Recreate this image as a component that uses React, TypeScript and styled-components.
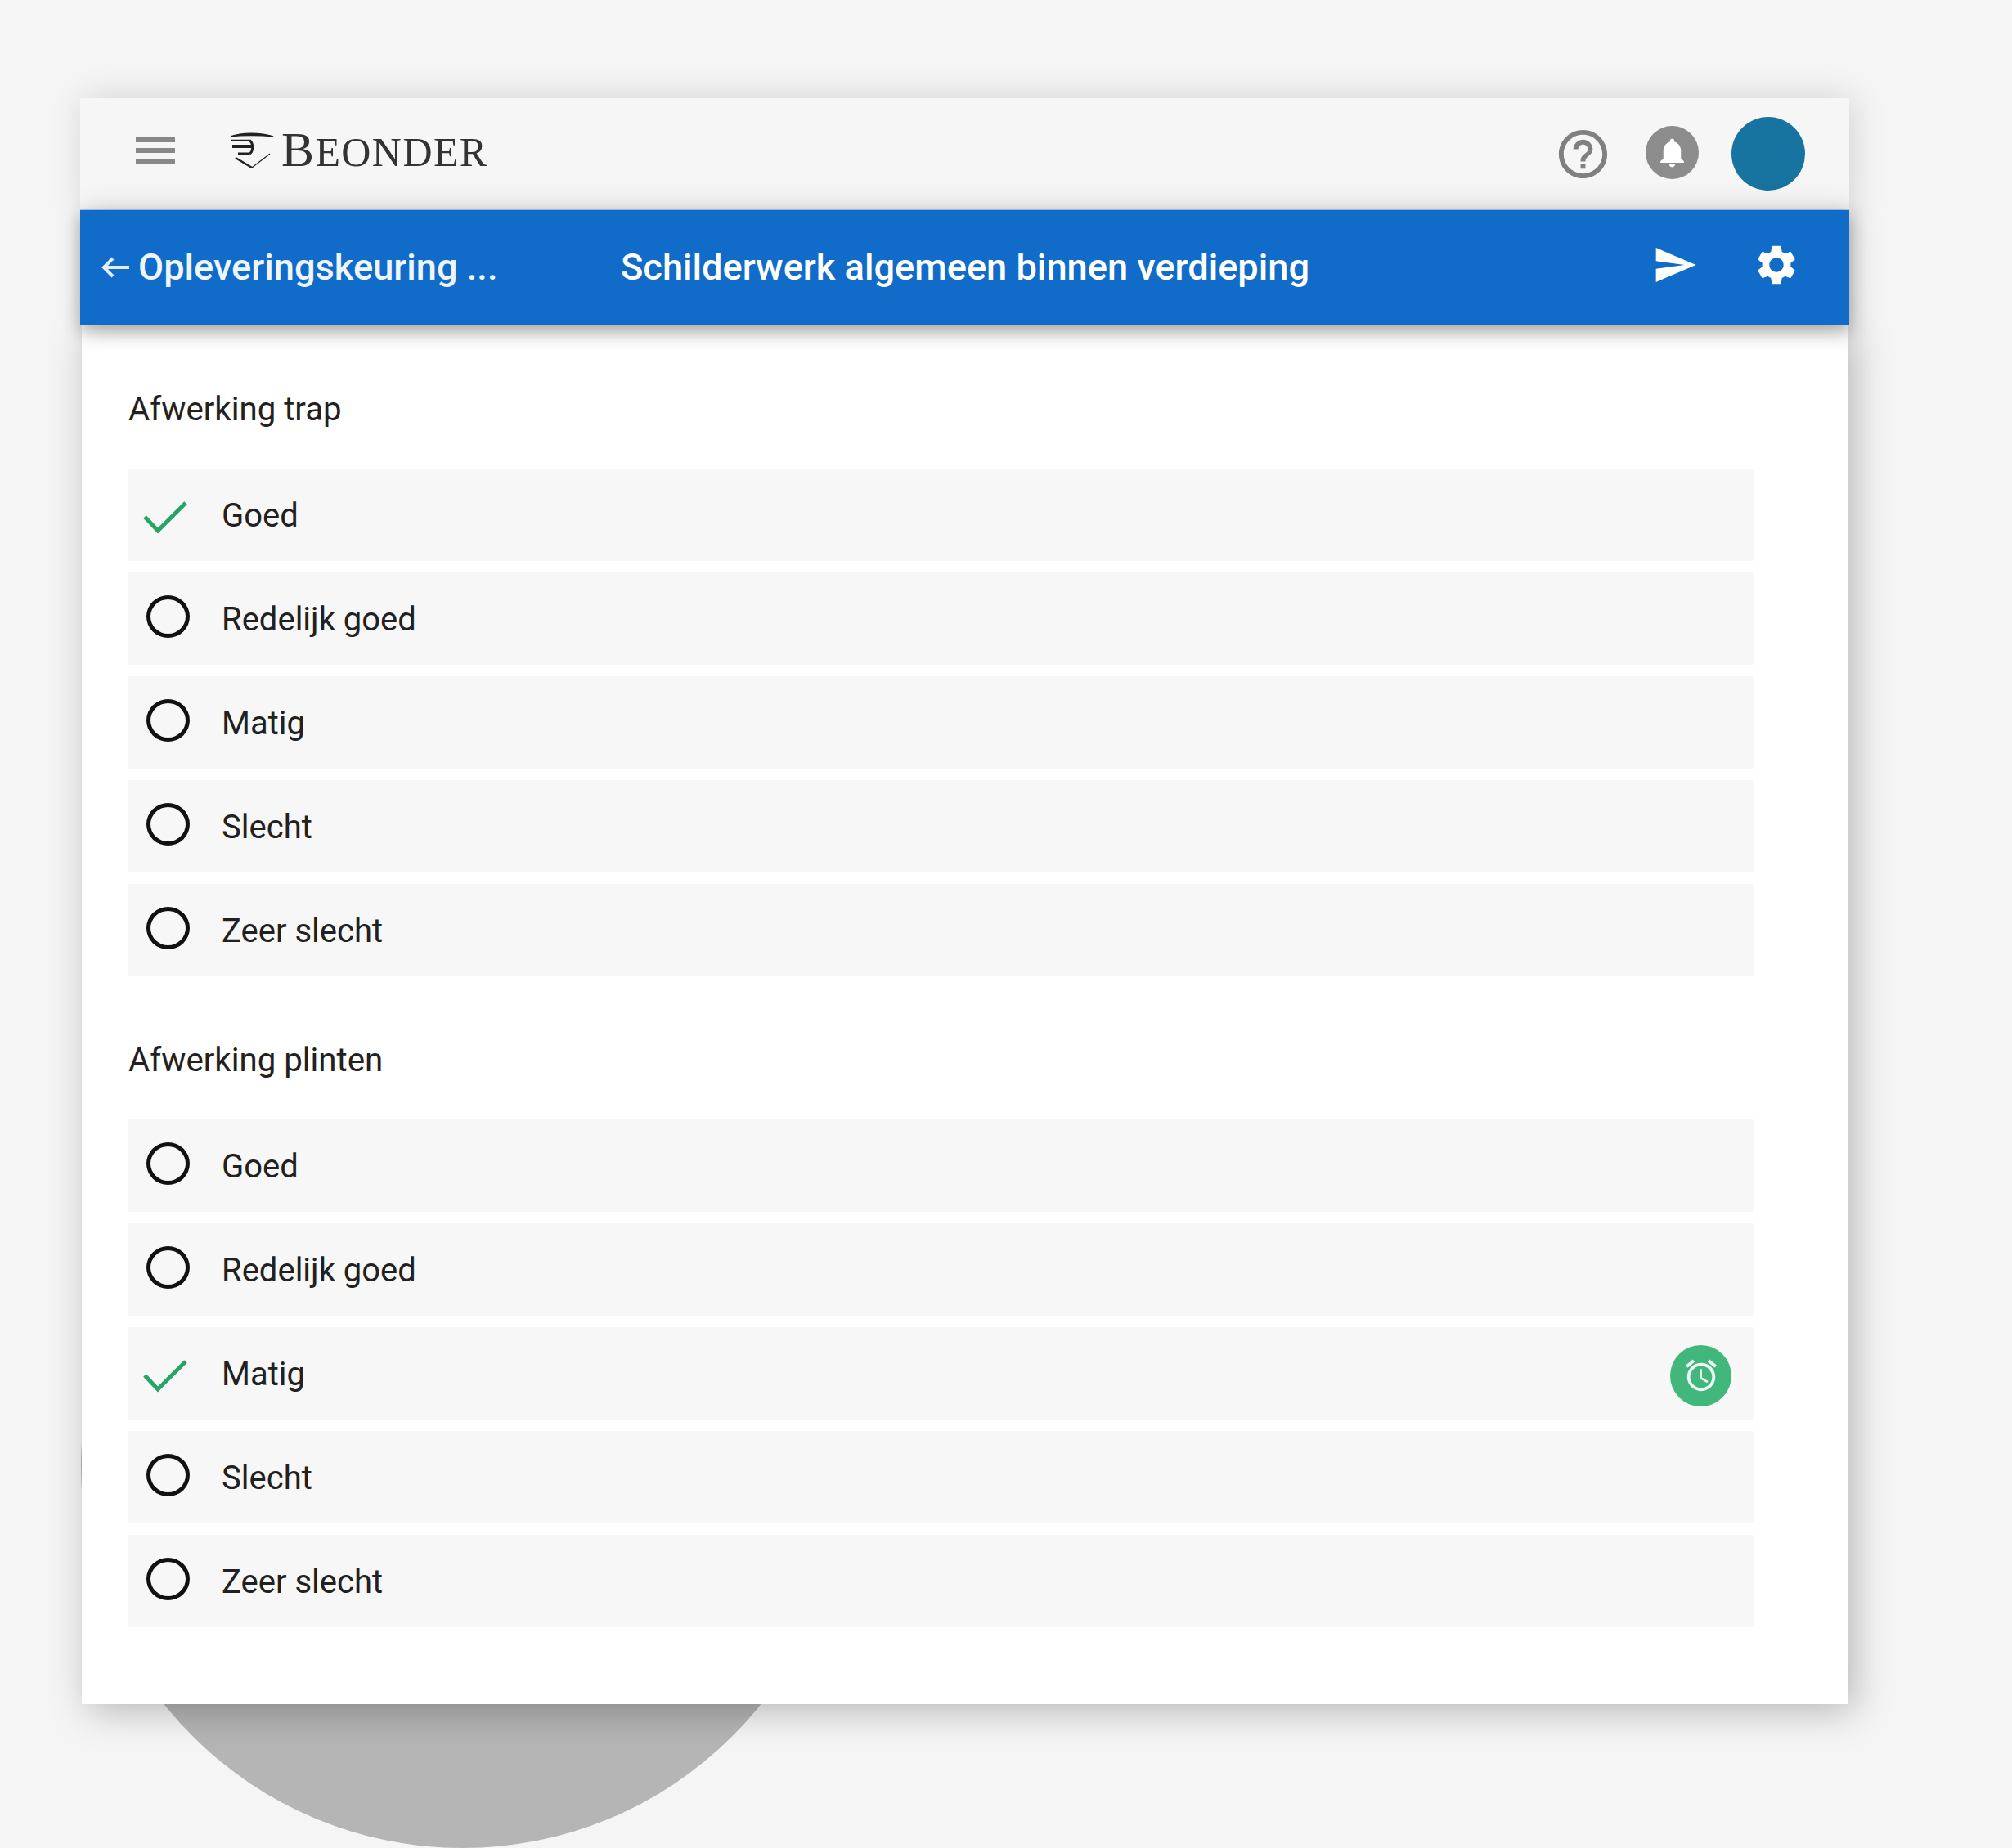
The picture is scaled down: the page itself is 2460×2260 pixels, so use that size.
import styled, { createGlobalStyle } from 'styled-components';
import { MdHelpOutline, MdNotifications, MdSend, MdSettings, MdOutlineAlarm } from 'react-icons/md';

const options = ['Goed', 'Redelijk goed', 'Matig', 'Slecht', 'Zeer slecht'];

const groups = [
  { title: 'Afwerking trap', checked: 'Goed', alarm: false },
  { title: 'Afwerking plinten', checked: 'Matig', alarm: true },
];

const App = () => {
  return (
    <Page>
      <GlobalStyle />
      <BackCircle />
      <Card>
        <TopBar>
          <Hamburger>
            <span />
            <span />
            <span />
          </Hamburger>
          <Logo>
            <svg width="54" height="46" viewBox="0 0 54 46" fill="none" stroke="#222">
              <path d="M1 6 C14 1 38 1 53 6 C38 4 14 4 1 6 Z" strokeWidth="1.4" fill="#222" />
              <path d="M1 10.5 H24" strokeWidth="1.5" />
              <path d="M3 18 H27" strokeWidth="4" />
              <path d="M10 27 H24" strokeWidth="3" />
              <path d="M24 10.5 C29 14 29 24 24 27" strokeWidth="3" />
              <path d="M7 32 L27 44" strokeWidth="2.6" />
              <path d="M27 44 L49 27" strokeWidth="1.2" />
            </svg>
            <LogoText>
              B<small>EONDER</small>
            </LogoText>
          </Logo>
          <TopActions>
            <HelpIcon />
            <BellBadge>
              <MdNotifications size={43} color="#fff" />
            </BellBadge>
            <Avatar />
          </TopActions>
        </TopBar>
        <TitleBar>
          <BackLink>
            <svg width="34" height="28" viewBox="0 0 34 28" fill="none" stroke="#e4eefa" strokeWidth="4">
              <path d="M14 3 L3 14 L14 25 M3 14 H34" />
            </svg>
            <span>Opleveringskeuring ...</span>
          </BackLink>
          <PageTitle>Schilderwerk algemeen binnen verdieping</PageTitle>
          <SendIcon />
          <GearIcon />
        </TitleBar>
        <Body>
          {groups.map((group) => (
            <Group key={group.title}>
              <GroupTitle>{group.title}</GroupTitle>
              <OptionList>
                {options.map((option) => (
                  <OptionRow key={option}>
                    <Marker $checked={option === group.checked}>
                      {option === group.checked ? (
                        <svg width="54" height="42" viewBox="0 0 54 42" fill="none" stroke="#27a567" strokeWidth="5">
                          <path d="M2 20 L18 37 L52 3" />
                        </svg>
                      ) : (
                        <Radio />
                      )}
                    </Marker>
                    <OptionText>{option}</OptionText>
                    {group.alarm && option === group.checked && (
                      <AlarmBadge>
                        <MdOutlineAlarm size={46} color="#f0faf5" />
                      </AlarmBadge>
                    )}
                  </OptionRow>
                ))}
              </OptionList>
            </Group>
          ))}
        </Body>
      </Card>
    </Page>
  );
};

const GlobalStyle = createGlobalStyle`
  body {
    margin: 0;
    background: #f5f5f5;
    font-family: Roboto, 'Liberation Sans', sans-serif;
  }
`;

const Page = styled.div`
  position: relative;
  width: 2460px;
  height: 2260px;
  padding: 120px 0 0 98px;
  box-sizing: border-box;
  overflow: hidden;
  background: #f5f5f5;
`;

const BackCircle = styled.div`
  position: absolute;
  left: 99px;
  top: 1327px;
  width: 933px;
  height: 933px;
  border-radius: 50%;
  background: #b5b5b5;
`;

const Card = styled.div`
  position: relative;
  width: 2163px;
`;

const TopBar = styled.header`
  display: flex;
  align-items: center;
  height: 137px;
  padding: 0 54px 0 68px;
  box-sizing: border-box;
  background: #f6f6f6;
  border-bottom: 1px solid #b7cfe8;
  box-shadow: 4px 0 40px rgba(0, 0, 0, 0.14);
`;

const Hamburger = styled.div`
  display: flex;
  flex-direction: column;
  justify-content: space-between;
  width: 48px;
  height: 32px;
  margin-top: -8px;

  span {
    height: 6px;
    background: #888;
  }
`;

const Logo = styled.div`
  display: flex;
  align-items: center;
  gap: 9px;
  margin: -8px 0 0 67px;
`;

const LogoText = styled.div`
  font-family: 'Liberation Serif', serif;
  font-size: 60px;
  line-height: 60px;
  letter-spacing: 1.4px;
  color: #333;

  small {
    font-size: 50px;
  }
`;

const TopActions = styled.div`
  display: flex;
  align-items: center;
  margin-left: auto;
`;

const HelpIcon = styled(MdHelpOutline)`
  width: 71px;
  height: 71px;
  color: #808080;
`;

const BellBadge = styled.div`
  display: flex;
  align-items: center;
  justify-content: center;
  width: 65px;
  height: 65px;
  margin: -4px 40px 0 41px;
  border-radius: 50%;
  background: #8c8c8c;
`;

const Avatar = styled.div`
  width: 90px;
  height: 90px;
  border-radius: 50%;
  background: #17739f;
`;

const TitleBar = styled.div`
  position: relative;
  z-index: 1;
  display: flex;
  align-items: center;
  height: 140px;
  padding: 0 60px 0 26px;
  box-sizing: border-box;
  background: #116bc8;
  color: #fff;
  box-shadow: 0 8px 20px rgba(0, 0, 0, 0.3), 8px 0 36px rgba(0, 0, 0, 0.14);
`;

const BackLink = styled.div`
  display: flex;
  align-items: center;
  gap: 11px;
  width: 635px;
  font-size: 45.2px;
  font-weight: 500;
  color: #eef5fc;

  span {
    margin-top: -2px;
  }
`;

const PageTitle = styled.div`
  flex: 1;
  margin-top: -2px;
  font-size: 45.2px;
  font-weight: 500;
`;

const SendIcon = styled(MdSend)`
  width: 56px;
  height: 56px;
  margin: -6px 0 0 0;
  color: #fff;
`;

const GearIcon = styled(MdSettings)`
  width: 58px;
  height: 58px;
  margin: -6px 0 0 67px;
  color: #fff;
`;

const Body = styled.main`
  display: flex;
  flex-direction: column;
  gap: 73px;
  height: 1687px;
  margin: 0 2px;
  padding: 74px 114px 0 57px;
  box-sizing: border-box;
  background: #fff;
  box-shadow: 8px 8px 44px rgba(0, 0, 0, 0.26);
`;

const Group = styled.section`
  display: flex;
  flex-direction: column;
`;

const GroupTitle = styled.h2`
  margin: 0 0 42px;
  font-size: 40.2px;
  line-height: 60px;
  font-weight: 400;
  color: #212121;
`;

const OptionList = styled.div`
  display: flex;
  flex-direction: column;
  gap: 14px;
`;

const OptionRow = styled.div`
  display: flex;
  align-items: center;
  height: 113px;
  padding-right: 27px;
  background: #f7f7f7;
`;

const Marker = styled.div<{ $checked: boolean }>`
  display: flex;
  align-items: center;
  justify-content: center;
  flex: none;
  width: 54px;
  height: 54px;
  margin: ${({ $checked }) => ($checked ? '6px 42px 0 18px' : '-6px 39px 0 21px')};
`;

const Radio = styled.div`
  width: 53px;
  height: 52px;
  box-sizing: border-box;
  border: 5.5px solid #111;
  border-radius: 50%;
`;

const OptionText = styled.span`
  margin-top: 1px;
  font-size: 40px;
  color: #212121;
`;

const AlarmBadge = styled.div`
  display: flex;
  align-items: center;
  justify-content: center;
  width: 75px;
  height: 75px;
  margin: 5px 1px 0 auto;
  border-radius: 50%;
  background: #41b77c;
`;

export default App;
